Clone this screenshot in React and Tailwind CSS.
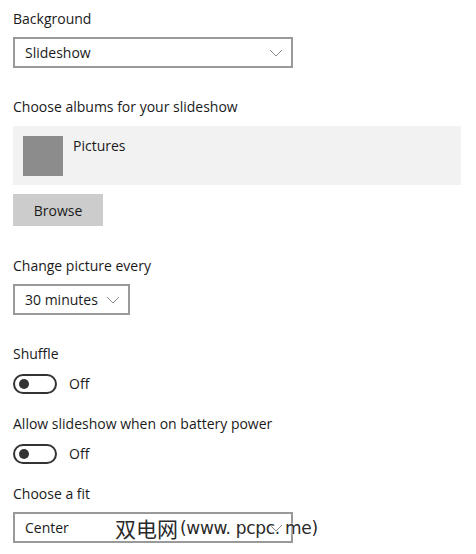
import React from "react";

const Chevron = () => (
  <svg width="14" height="8" viewBox="0 0 14 8" fill="none" className="shrink-0">
    <path d="M1 1l6 6 6-6" stroke="#8a8a8a" strokeWidth="1" />
  </svg>
);

const Dropdown = ({ value, width }) => (
  <div className={`flex items-center justify-between h-[31px] border-2 border-[#999999] pl-[10px] pr-[8px] ${width}`}>
    <span>{value}</span>
    <Chevron />
  </div>
);

const Toggle = () => (
  <div className="flex items-center gap-3 mt-[10px] h-[20px] leading-[20px]">
    <div className="w-[44px] h-[20px] rounded-full border-2 border-[#333333] flex items-center pl-[4px]">
      <div className="w-[10px] h-[10px] rounded-full bg-[#333333]" />
    </div>
    <span>Off</span>
  </div>
);

export default function App() {
  return (
    <div
      className="relative w-[476px] h-[554px] bg-white text-[#1a1a1a] text-[14px] overflow-hidden pl-[13px] pt-[9px]"
      style={{ fontFamily: '"Open Sans", "Noto Sans", sans-serif' }}
    >
      <div className="leading-[20px]">Background</div>
      <div className="mt-[8px]">
        <Dropdown value="Slideshow" width="w-[280px]" />
      </div>

      <div className="mt-[29px] leading-[20px]">Choose albums for your slideshow</div>
      <div className="mt-[9px] w-[448px] h-[59px] bg-[#f2f2f2] flex items-start pl-[10px] pt-[10px] gap-[10px]">
        <div className="w-[40px] h-[40px] bg-[#8c8c8c]" />
        <span className="leading-[20px]">Pictures</span>
      </div>
      <button className="mt-[9px] w-[90px] h-[32px] bg-[#cccccc] flex items-center justify-center">
        Browse
      </button>

      <div className="mt-[30px] leading-[20px]">Change picture every</div>
      <div className="mt-[8px]">
        <Dropdown value="30 minutes" width="w-[117px]" />
      </div>

      <div className="mt-[29px] leading-[20px]">Shuffle</div>
      <Toggle />

      <div className="mt-[20px] leading-[20px]">Allow slideshow when on battery power</div>
      <Toggle />

      <div className="mt-[20px] leading-[20px]">Choose a fit</div>
      <div className="mt-[8px]">
        <Dropdown value="Center" width="w-[280px]" />
      </div>

      <div
        className="absolute left-[115px] top-[513px] flex items-center text-[#2a2a2a]"
        style={{ textShadow: "0 0 2px #fff, 0 0 2px #fff" }}
      >
        <span className="text-[21px]" style={{ fontFamily: '"Noto Sans CJK SC", sans-serif' }}>
          双电网
        </span>
        <span className="text-[17px] ml-[2px] tracking-[-0.3px]" style={{ fontFamily: '"DejaVu Sans", sans-serif' }}>
          (www. pcpc. me)
        </span>
      </div>
    </div>
  );
}
